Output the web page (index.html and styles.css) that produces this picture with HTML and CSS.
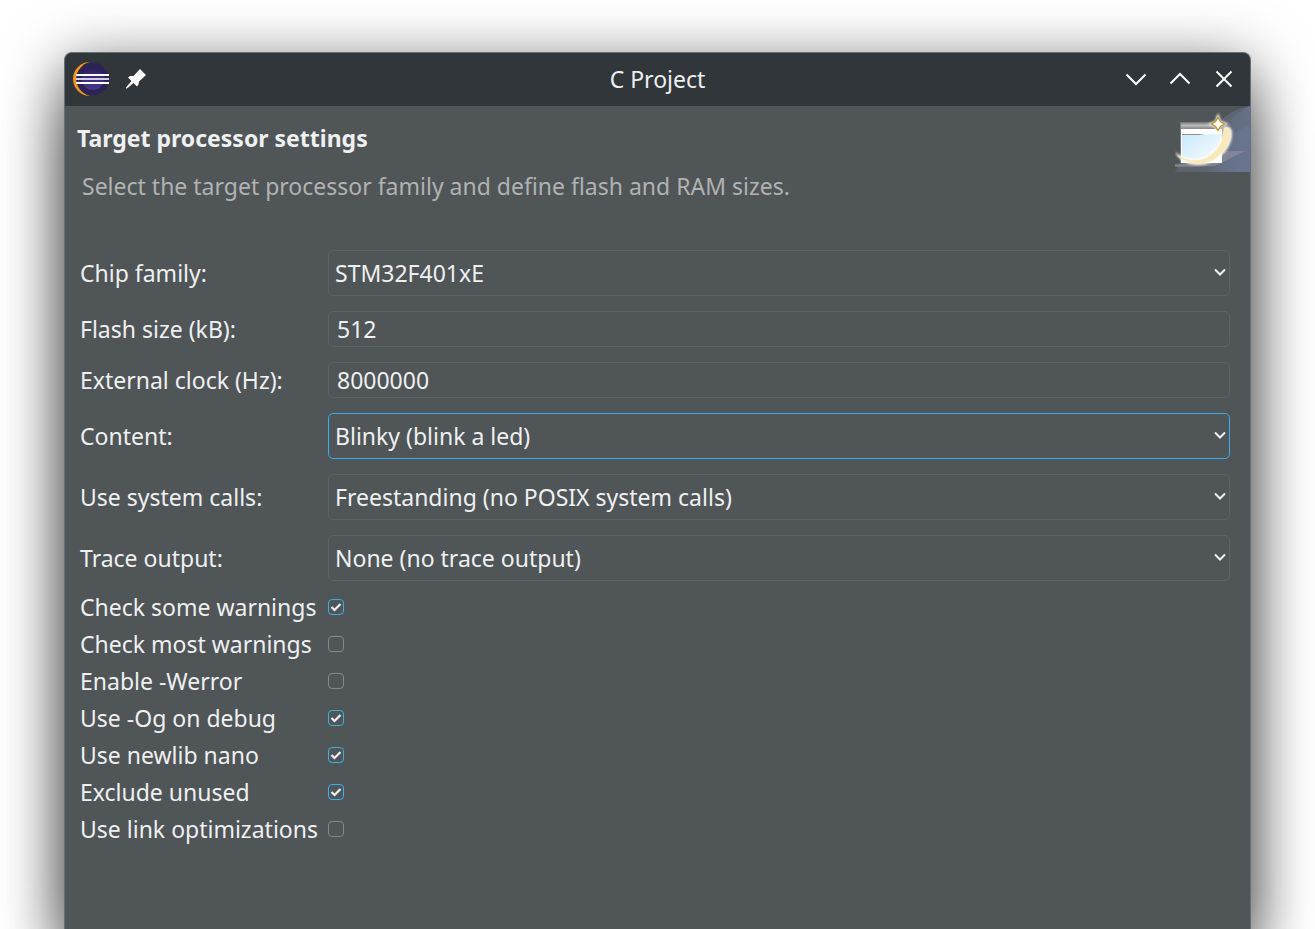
FILE: index.html
```html
<!DOCTYPE html>
<html lang="en">
<head>
<meta charset="utf-8">
<title>C Project</title>
<link rel="stylesheet" href="styles.css">
</head>
<body>
<main class="window">
  <header class="titlebar">
    <div class="titlebar-side titlebar-start">
      <svg class="app-icon" width="38" height="36" viewBox="0 0 38 36" aria-hidden="true">
        <defs>
          <linearGradient id="moon" x1="0" y1="0" x2="0" y2="1">
            <stop offset="0" stop-color="#2c2255"/>
            <stop offset=".5" stop-color="#3d2f7c"/>
            <stop offset="1" stop-color="#473788"/>
          </linearGradient>
        </defs>
        <ellipse cx="18" cy="17" rx="17" ry="17" fill="#f7941e"/>
        <path d="M18 0h19v34H18z" fill="#31363a"/>
        <circle cx="22" cy="17" r="17.500" fill="#31363a"/>
        <circle cx="20.500" cy="17" r="16.200" fill="#2c2255"/>
        <circle cx="21" cy="17" r="11" fill="url(#moon)"/>
        <path d="M4 12h33v2H4zM4 20h33v2H4z" fill="#fff"/>
        <path d="M4 16h33v2H4z" fill="#d3cfe2"/>
      </svg>
      <button class="icon-button pin" aria-label="Keep above">
        <svg width="22" height="22" viewBox="0 0 22 22" aria-hidden="true">
          <path d="M15 1L21 7 14 13.500 13.500 16.500 12 18.500 8.500 15 2 20.500 1 20.500 1 19.500 6.500 13 3 9.500 5 8 8.500 8Z" fill="#fcfcfc"/>
        </svg>
      </button>
    </div>
    <h1 class="window-title">C Project</h1>
    <div class="titlebar-side titlebar-controls">
      <button class="icon-button" aria-label="Minimize">
        <svg width="24" height="24" viewBox="0 0 24 24" aria-hidden="true"><path d="M2.500 7.500L12 17l9.500-9.500"/></svg>
      </button>
      <button class="icon-button" aria-label="Maximize">
        <svg width="24" height="24" viewBox="0 0 24 24" aria-hidden="true"><path d="M2.500 16.500L12 7l9.500 9.500"/></svg>
      </button>
      <button class="icon-button" aria-label="Close">
        <svg width="24" height="24" viewBox="0 0 24 24" aria-hidden="true"><path d="M4.500 4.500l15 15M19.500 4.500l-15 15"/></svg>
      </button>
    </div>
  </header>

  <section class="banner">
    <div class="banner-text">
      <h2 class="banner-title">Target processor settings</h2>
      <p class="banner-description">Select the target processor family and define flash and RAM sizes.</p>
    </div>
    <svg class="banner-art" width="75" height="66" viewBox="0 0 75 66" aria-hidden="true">
      <defs>
        <linearGradient id="sky" x1="0" y1="0" x2="1" y2="1">
          <stop offset="0" stop-color="#c8e8fc"/><stop offset="1" stop-color="#fbfeff"/>
        </linearGradient>
        <linearGradient id="haze" x1="0" y1="0" x2="1" y2="0">
          <stop offset="0" stop-color="#666c73"/><stop offset="1" stop-color="#687389"/>
        </linearGradient>
        <linearGradient id="swoosh" x1="0" y1="0" x2="1" y2="0">
          <stop offset="0" stop-color="#69758f" stop-opacity=".2"/><stop offset="1" stop-color="#69758f"/>
        </linearGradient>
        <linearGradient id="bar" x1="0" y1="0" x2="0" y2="1">
          <stop offset="0" stop-color="#8b8b8b"/><stop offset=".4" stop-color="#b9b9b9"/><stop offset="1" stop-color="#858585"/>
        </linearGradient>
        <filter id="glow" x="-20%" y="-20%" width="140%" height="140%"><feGaussianBlur stdDeviation=".9"/></filter>
      </defs>
      <path d="M75 0C58 3 42 12 32 36L4 58 0 66H75Z" fill="url(#haze)" opacity=".6"/>
      <path d="M75 0C66 4 56 12 49 24L40 66H75Z" fill="url(#swoosh)" opacity=".7"/>
      <path d="M75 20C61 23 42 36 32 66H75Z" fill="url(#swoosh)"/>
      <path d="M48 45H70L40 60 0 61V58L47 56Z" fill="#8b8b9c" opacity=".75"/>
      <path d="M5 16H47V57H5Z" fill="#777b80"/>
      <path d="M6 17H47V23H6Z" fill="url(#bar)"/>
      <path d="M6 23H47V57H6Z" fill="#fff"/>
      <path d="M7 29L47 28V56H7Z" fill="url(#sky)"/>
      <path d="M7 28H30L24 29H7Z" fill="#8a8f94"/>
      <path d="M48 21C53 19 57 22 57 26C58 37 50 50 37 56C24 62 6 59 0 46C12 55 25 55 34 49C43 42 47 34 48 21Z" fill="#fffbe8" filter="url(#glow)"/>
      <path d="M49 23C53 21 55 23 55 26C56 36 48 49 36 55C25 60 9 57 2 49C13 56 26 56 35 50C44 43 49 34 49 23Z" fill="#f8e8ba"/>
      <path d="M43 7L46 15 54 18 46 21 43 28 40 21 33 18 40 15Z" fill="#fff" filter="url(#glow)"/>
      <path d="M43 11.500L45.500 15.500 49.500 18 45.500 20.500 43 24.500 40.500 20.500 36.500 18 40.500 15.500Z" fill="#fffdf4" stroke="#bd8d2f" stroke-width="1.300"/>
    </svg>
  </section>

  <form class="settings">
    <div class="field">
      <label for="chip">Chip family:</label>
      <div class="select-box">
        <select id="chip"><option>STM32F401xE</option></select>
        <svg class="chevron" viewBox="0 0 12 8" aria-hidden="true"><path d="M1 1.500l5 5 5-5"/></svg>
      </div>
    </div>
    <div class="field">
      <label for="flash">Flash size (kB):</label>
      <input class="text-input" id="flash" type="text" value="512">
    </div>
    <div class="field">
      <label for="clock">External clock (Hz):</label>
      <input class="text-input" id="clock" type="text" value="8000000">
    </div>
    <div class="field">
      <label for="content">Content:</label>
      <div class="select-box">
        <select class="is-active" id="content"><option>Blinky (blink a led)</option></select>
        <svg class="chevron" viewBox="0 0 12 8" aria-hidden="true"><path d="M1 1.500l5 5 5-5"/></svg>
      </div>
    </div>
    <div class="field">
      <label for="syscalls">Use system calls:</label>
      <div class="select-box">
        <select id="syscalls"><option>Freestanding (no POSIX system calls)</option></select>
        <svg class="chevron" viewBox="0 0 12 8" aria-hidden="true"><path d="M1 1.500l5 5 5-5"/></svg>
      </div>
    </div>
    <div class="field">
      <label for="trace">Trace output:</label>
      <div class="select-box">
        <select id="trace"><option>None (no trace output)</option></select>
        <svg class="chevron" viewBox="0 0 12 8" aria-hidden="true"><path d="M1 1.500l5 5 5-5"/></svg>
      </div>
    </div>
    <div class="checks">
      <div class="check-row"><label for="some">Check some warnings</label><input id="some" type="checkbox" checked></div>
      <div class="check-row"><label for="most">Check most warnings</label><input id="most" type="checkbox"></div>
      <div class="check-row"><label for="werror">Enable -Werror</label><input id="werror" type="checkbox"></div>
      <div class="check-row"><label for="og">Use -Og on debug</label><input id="og" type="checkbox" checked></div>
      <div class="check-row"><label for="nano">Use newlib nano</label><input id="nano" type="checkbox" checked></div>
      <div class="check-row"><label for="unused">Exclude unused</label><input id="unused" type="checkbox" checked></div>
      <div class="check-row"><label for="lto">Use link optimizations</label><input id="lto" type="checkbox"></div>
    </div>
  </form>
</main>
</body>
</html>
```
FILE: styles.css
```css
* {
  box-sizing: border-box;
}

html {
  background: #fff;
}

body {
  display: flex;
  flex-direction: column;
  min-height: 100vh;
  margin: 0;
  padding: 52px 64px 0;
  overflow-x: hidden;
  color: #eff0f1;
  font-family: "Noto Sans", sans-serif;
  font-size: 23px;
  line-height: 32px;
}

.window {
  flex: 1;
  border: 1px solid #65707a;
  border-bottom: 0;
  border-radius: 8px 8px 0 0;
  background: #505557;
  box-shadow: 0 12px 60px rgba(0, 0, 0, 0.6), 0 60px 60px rgba(0, 0, 0, 0.4);
}

.titlebar {
  display: grid;
  grid-template-columns: 1fr auto 1fr;
  align-items: center;
  height: 53px;
  border-radius: 7px 7px 0 0;
  background: #31363a;
}

.titlebar-side {
  display: flex;
  align-items: center;
}

.titlebar-start {
  gap: 15px;
  padding-left: 7px;
}

.titlebar-controls {
  justify-content: flex-end;
  gap: 20px;
  padding: 0 14px 2px 0;
}

.window-title {
  margin: 0;
  padding-bottom: 2px;
  font-size: 23px;
  font-weight: 400;
}

.icon-button {
  display: flex;
  padding: 0;
  border: 0;
  background: none;
}

.pin {
  padding-bottom: 2px;
}

.titlebar-controls svg {
  fill: none;
  stroke: #fcfcfc;
  stroke-width: 2;
}

.banner {
  display: flex;
  align-items: flex-start;
  justify-content: space-between;
  min-height: 128px;
}

.banner-text {
  padding: 16px 12px 0;
}

.banner-title {
  margin: 0 0 16px;
  font-size: 23px;
  font-weight: 700;
}

.banner-description {
  margin: 0;
  padding-left: 5px;
  color: #b0b2b3;
}

.banner-art {
  flex: none;
}

.settings {
  display: flex;
  flex-direction: column;
  gap: 15px;
  padding: 16px 20px 24px 15px;
}

.field,
.check-row {
  display: grid;
  grid-template-columns: 248px 1fr;
  align-items: center;
}

.select-box {
  display: grid;
  position: relative;
}

select,
.text-input {
  width: 100%;
  margin: 0;
  border: 1px solid #5d6265;
  border-radius: 5px;
  outline: 0;
  background: transparent;
  color: inherit;
  font: inherit;
  appearance: none;
}

select {
  height: 46px;
  padding: 0 24px 0 6px;
}

.text-input {
  height: 36px;
  padding: 0 8px;
}

select.is-active {
  border-color: #3daee9;
}

.chevron {
  position: absolute;
  top: 18px;
  right: 4px;
  width: 12px;
  height: 8px;
  fill: none;
  stroke: #eff0f1;
  stroke-width: 2;
  pointer-events: none;
}

.checks {
  margin-top: -8px;
}

.check-row {
  height: 37px;
}

.check-row label {
  white-space: nowrap;
}

.check-row input {
  width: 16px;
  height: 16px;
  margin: 0;
  border: 1px solid #85898b;
  border-radius: 4px;
  appearance: none;
}

.check-row input:checked {
  border-color: #3daee9;
  background: url("data:image/svg+xml,%3Csvg xmlns='http://www.w3.org/2000/svg' viewBox='0 0 14 14'%3E%3Cpath d='M2.500 7l3 3 6-6' fill='none' stroke='%23eff0f1' stroke-width='2.200'/%3E%3C/svg%3E") center / 14px no-repeat;
}
```
